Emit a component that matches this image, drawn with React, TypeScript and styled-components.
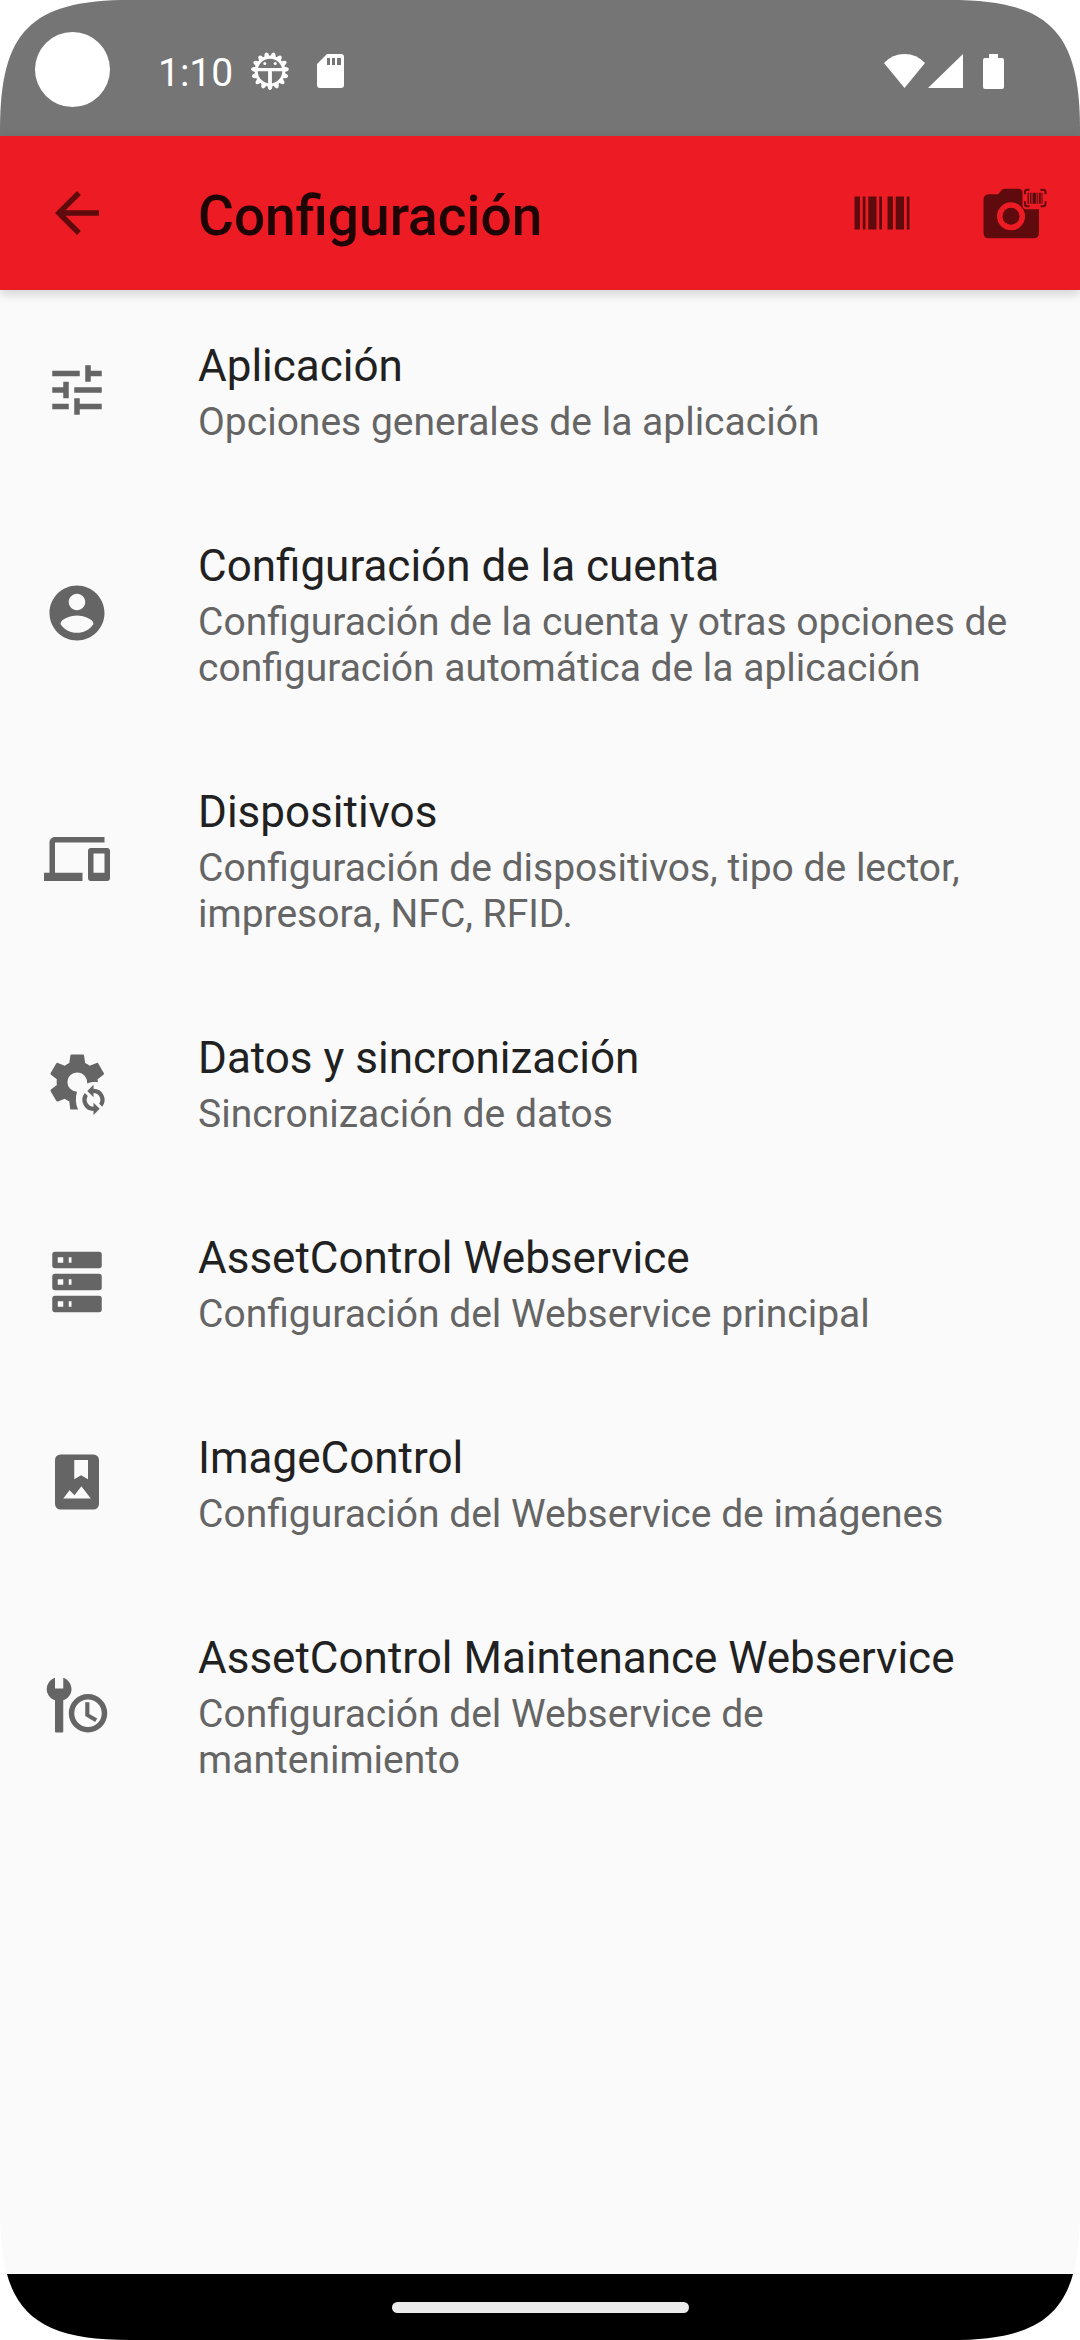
import React from "react";
import styled, { createGlobalStyle } from "styled-components";

const GlobalStyle = createGlobalStyle`
  html, body { margin: 0; padding: 0; background: #ffffff; }
  * { box-sizing: border-box; }
`;

const Screen = styled.div`
  width: 1080px;
  height: 2340px;
  display: flex;
  flex-direction: column;
  background: #fafafa;
  font-family: Roboto, "Noto Sans", sans-serif;
  overflow: hidden;
  clip-path: path("M0 130 C0 31 31 0 130 0 H950 C1049 0 1080 31 1080 130 V2210 C1080 2309 1049 2340 950 2340 H130 C31 2340 0 2309 0 2210 Z");
`;

const StatusBar = styled.header`
  height: 136px;
  flex: none;
  display: flex;
  align-items: center;
  padding: 2px 76px 0 35px;
  background: #757575;
  color: #ffffff;
`;

const CameraHole = styled.div`
  width: 75px;
  height: 75px;
  border-radius: 50%;
  background: #ffffff;
  margin-right: 48px;
`;

const Clock = styled.span`
  font-size: 39px;
  line-height: 46px;
  width: 92px;
  padding-top: 8px;
`;

const StatusIcons = styled.div<{ $end?: boolean }>`
  display: flex;
  align-items: center;
  margin-left: ${(p) => (p.$end ? "auto" : "0")};
  padding-top: 4px;
`;

const Glyph = styled.svg<{ $w: number; $h?: number; $gap?: number }>`
  display: block;
  flex: none;
  width: ${(p) => p.$w}px;
  height: ${(p) => p.$h ?? p.$w}px;
  margin-left: ${(p) => p.$gap ?? 0}px;
  fill: currentColor;
  overflow: visible;
`;

const AppBar = styled.div`
  height: 154px;
  flex: none;
  display: flex;
  align-items: center;
  padding: 0 33px 0 44px;
  background: #ed1c24;
  color: #5f0b0e;
  box-shadow: 0 4px 10px rgba(0, 0, 0, 0.16);
`;

const BarTitle = styled.h1`
  margin: 0 auto 0 88px;
  font-size: 55px;
  line-height: 64px;
  font-weight: 500;
  color: #1f0405;
  padding-top: 6px;
`;

const BarButton = styled.button`
  display: flex;
  padding: 0;
  border: 0;
  background: none;
  color: inherit;
  & + & { margin-left: 66px; }
`;

const List = styled.main`
  flex: 1;
  display: flex;
  flex-direction: column;
`;

const Row = styled.section`
  display: flex;
  align-items: center;
  padding: 0 44px;
  color: #656565;
`;

const RowText = styled.div`
  margin-left: 88px;
  padding: 50px 0 45px;
  width: 838px;
`;

const RowTitle = styled.h2`
  margin: 0 0 7px;
  font-size: 44px;
  line-height: 52px;
  font-weight: 400;
  color: #212121;
`;

const RowSummary = styled.p`
  margin: 0;
  font-size: 39px;
  line-height: 46px;
  white-space: pre-line;
`;

const NavBar = styled.footer`
  height: 66px;
  flex: none;
  display: flex;
  justify-content: center;
  align-items: center;
  background: #000000;
`;

const NavHandle = styled.div`
  width: 297px;
  height: 11px;
  border-radius: 6px;
  background: #ebebeb;
`;

const teeth = Array.from({ length: 15 }, (_, i) => 180 + i * 24);

const DebugIcon = () => (
  <Glyph $w={40} viewBox="-20 -20 40 40">
    {teeth.map((a) => (
      <path key={a} d="M-3.200 -13 L-1.900 -17.400 Q0 -20.600 1.900 -17.400 L3.200 -13 Z" transform={`rotate(${a})`} />
    ))}
    <circle r="13.800" fill="none" stroke="currentColor" strokeWidth="3" />
    <path d="M-13 -3H13V0.200H1.900V14H-1.900V0.200H-13Z" />
    <circle cx="-5.200" cy="-7.500" r="1.500" />
    <circle cx="5.200" cy="-7.500" r="1.500" />
  </Glyph>
);

const rows = [
  {
    title: "Aplicación",
    summary: "Opciones generales de la aplicación",
    icon: <path d="M3 17v2h6v-2H3zM3 5v2h10V5H3zm10 16v-2h8v-2h-8v-2h-2v6h2zM7 9v2H3v2h4v2h2V9H7zm14 4v-2H11v2h10zm-6-4h2V7h4V5h-4V3h-2v6z" />,
  },
  {
    title: "Configuración de la cuenta",
    summary: "Configuración de la cuenta y otras opciones de\nconfiguración automática de la aplicación",
    icon: (
      <path
        fillRule="evenodd"
        d="M12 2C6.480 2 2 6.480 2 12s4.480 10 10 10 10-4.480 10-10S17.520 2 12 2zM12 5c1.660 0 3 1.340 3 3s-1.340 3-3 3-3-1.340-3-3 1.340-3 3-3zM12 19.200c-2.500 0-4.710-1.280-6-3.220.03-1.990 4-3.080 6-3.080s5.970 1.090 6 3.080c-1.290 1.940-3.500 3.220-6 3.220z"
      />
    ),
  },
  {
    title: "Dispositivos",
    summary: "Configuración de dispositivos, tipo de lector,\nimpresora, NFC, RFID.",
    icon: <path d="M4 6h18V4H4c-1.100 0-2 .9-2 2v11H0v3h14v-3H4V6zm19 2h-6c-.55 0-1 .45-1 1v10c0 .55.45 1 1 1h6c.55 0 1-.45 1-1V9c0-.55-.45-1-1-1zm-1 9h-4v-7h4v7z" />,
  },
  {
    title: "Datos y sincronización",
    summary: "Sincronización de datos",
    icon: (
      <>
        <path d="M12.400 22H9.900c-.25 0-.4-.16-.4-.4L9.200 19c-.6-.25-1.150-.55-1.660-.95L5.050 19.060c-.22.07-.5 0-.62-.22L2.430 15.380c-.12-.21-.08-.49.12-.64L4.660 13.100a8 8 0 0 1 0-2.060L2.550 9.370c-.19-.15-.24-.43-.12-.64l2-3.460c.12-.22.4-.3.62-.22L7.540 6.050c.51-.4 1.060-.73 1.660-.98l.38-2.650c.04-.24.25-.42.5-.42h4c.25 0 .46.18.5.42l.37 2.650c.63.26 1.170.58 1.690.98l2.490-1c.22-.08.49 0 .61.22l2 3.460c.12.22.07.49-.12.64l-2.110 1.630.05 1.050c-1.400-.1-2.700.05-3.860.5C15.900 10.300 14.300 8.500 12 8.500a3.500 3.500 0 0 0 0 7c-.6 2.200-.6 4.300.4 6.500z" />
        <path d="M18 14.500V13l-2.250 2.250L18 17.500V16a2.500 2.500 0 0 1 2.060 3.900l1.090 1.090A4 4 0 0 0 18 14.500zM18 21a2.500 2.500 0 0 1-2.060-3.900l-1.090-1.090A4 4 0 0 0 18 22.500V24l2.250-2.250L18 19.500V21z" />
      </>
    ),
  },
  {
    title: "AssetControl Webservice",
    summary: "Configuración del Webservice principal",
    icon: (
      <path
        fillRule="evenodd"
        d="M4 1h16a1 1 0 0 1 1 1v4a1 1 0 0 1-1 1H4a1 1 0 0 1-1-1V2a1 1 0 0 1 1-1zm0 8h16a1 1 0 0 1 1 1v4a1 1 0 0 1-1 1H4a1 1 0 0 1-1-1v-4a1 1 0 0 1 1-1zm0 8h16a1 1 0 0 1 1 1v4a1 1 0 0 1-1 1H4a1 1 0 0 1-1-1v-4a1 1 0 0 1 1-1zM9 5h1V3H9v2zm0 8h1v-2H9v2zm0 8h1v-2H9v2zM5 3v2h2V3H5zm0 8v2h2v-2H5zm0 8v2h2v-2H5z"
      />
    ),
  },
  {
    title: "ImageControl",
    summary: "Configuración del Webservice de imágenes",
    icon: (
      <path
        fillRule="evenodd"
        d="M6 2h12a2 2 0 0 1 2 2v16a2 2 0 0 1-2 2H6a2 2 0 0 1-2-2V4a2 2 0 0 1 2-2zM11 4v7l2.500-1.500L16 11V4h-5zM7 18h10l-3.400-4.500-2.500 3.300L9.300 15 7 18z"
      />
    ),
  },
  {
    title: "AssetControl Maintenance Webservice",
    summary: "Configuración del Webservice de\nmantenimiento",
    icon: (
      <>
        <path d="M4 2.100C2.200 2.700 1 4.400 1 6.300c0 1.700 1.100 3.300 3 4V21.500c0 .3.200.5.500.5h2c.3 0 .5-.2.500-.5V10.300c1.900-.7 3-2.300 3-4C10 4.400 8.800 2.700 7 2.100V6H4V2.100z" />
        <path fillRule="evenodd" d="M16 8a7 7 0 1 0 0 14 7 7 0 0 0 0-14zm0 2a5 5 0 1 1 0 10 5 5 0 0 1 0-10z" />
        <path d="M15 11v5l3.610 2.160.75-1.220-2.860-1.690V11H15z" />
      </>
    ),
  },
];

export default function App() {
  return (
    <>
      <GlobalStyle />
      <Screen>
        <StatusBar>
          <CameraHole />
          <Clock>1:10</Clock>
          <StatusIcons>
            <DebugIcon />
            <Glyph $w={27} $h={34} $gap={27} viewBox="0 0 27 34">
              <path fillRule="evenodd" d="M10 0H24a3 3 0 0 1 3 3V31a3 3 0 0 1-3 3H3a3 3 0 0 1-3-3V10zM10 4V11h3V4zm5 0V11h3V4zm5 0V11h4V4z" />
            </Glyph>
          </StatusIcons>
          <StatusIcons $end>
            <Glyph $w={41} $h={34} viewBox="0 0 41 34">
              <path d="M20.500 34 0 9Q8.500 0 20.500 0T41 9z" />
            </Glyph>
            <Glyph $w={35} $h={34} $gap={3} viewBox="0 0 35 34">
              <path d="M35 0V34H0z" />
            </Glyph>
            <Glyph $w={21} $h={35} $gap={20} viewBox="0 0 21 35">
              <path d="M6 0h9v4h4a2 2 0 0 1 2 2V33a2 2 0 0 1-2 2H2a2 2 0 0 1-2-2V6a2 2 0 0 1 2-2h4z" />
            </Glyph>
          </StatusIcons>
        </StatusBar>
        <AppBar>
          <BarButton aria-label="Volver">
            <Glyph $w={66} viewBox="0 0 24 24">
              <path d="M20 11H7.830l5.590-5.590L12 4l-8 8 8 8 1.410-1.410L7.830 13H20v-2z" />
            </Glyph>
          </BarButton>
          <BarTitle>Configuración</BarTitle>
          <BarButton aria-label="Lector de código">
            <Glyph $w={66} viewBox="0 0 24 24">
              <path d="M2 6h2v12H2V6zm3 0h1v12H5V6zm2 0h3v12H7V6zm4 0h1v12h-1V6zm3 0h2v12h-2V6zm3 0h3v12h-3V6zm4 0h1v12h-1V6z" />
            </Glyph>
          </BarButton>
          <BarButton aria-label="Cámara">
            <Glyph $w={66} viewBox="3 1.700 66 66">
              <path
                fillRule="evenodd"
                d="M11 16H20L24 11.500Q25 10.500 27 10.500H41Q44.500 11.500 44.500 14V27Q44.500 31 48.500 31H61V54.500Q61 60 55.500 60H11Q5.500 60 5.500 54.500V21.500Q5.500 16 11 16zM33 24a14 14 0 1 0 0 28 14 14 0 0 0 0-28z"
              />
              <circle cx="33" cy="38" r="8.500" />
              <path d="M47 16V13.500Q47 11.500 49 11.500H51.500M62.500 11.500H65Q67.500 11.500 67.500 13.500V16M67.500 23V26Q67.500 28 65 28H62.500M51.500 28H49Q47 28 47 26V23" fill="none" stroke="currentColor" strokeWidth="1.900" />
              <path d="M49.500 14.500h1.500v11h-1.500zM52 14.500h1.500v11H52zM54.500 14.500h3.800v11h-3.800zM59 14.500h.8v11H59zM60.800 14.500h2v11h-2zM63.500 14.500h1v11h-1z" />
            </Glyph>
          </BarButton>
        </AppBar>
        <List>
          {rows.map((r) => (
            <Row key={r.title}>
              <Glyph $w={66} viewBox="0 0 24 24">{r.icon}</Glyph>
              <RowText>
                <RowTitle>{r.title}</RowTitle>
                <RowSummary>{r.summary}</RowSummary>
              </RowText>
            </Row>
          ))}
        </List>
        <NavBar>
          <NavHandle />
        </NavBar>
      </Screen>
    </>
  );
}
